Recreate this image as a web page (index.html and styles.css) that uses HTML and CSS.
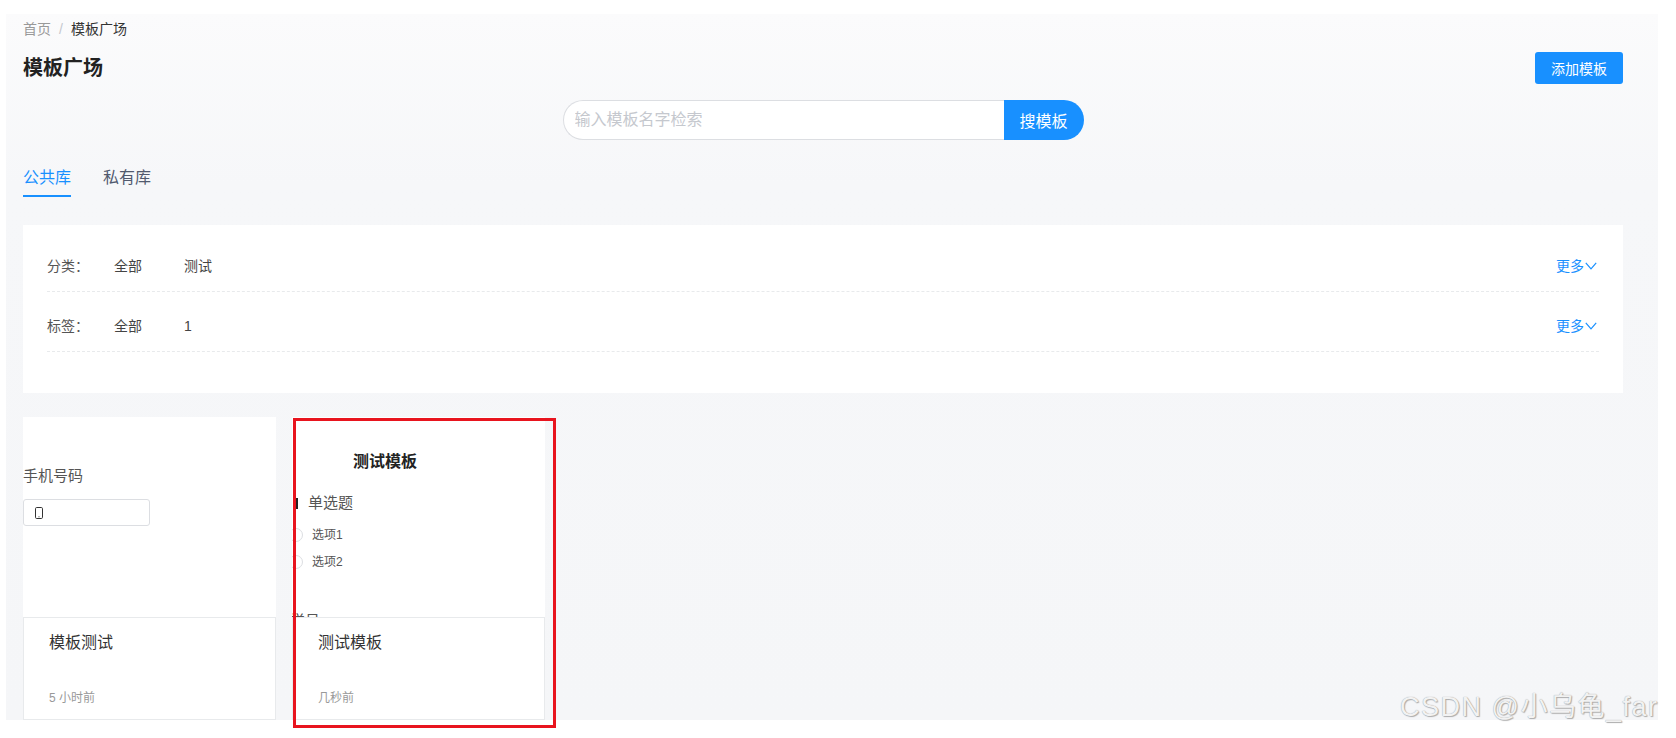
FILE: index.html
```html
<!DOCTYPE html>
<html lang="zh-CN">
<head>
<meta charset="utf-8">
<title>模板广场</title>
<link rel="stylesheet" href="styles.css">
</head>
<body>
<div class="page">
  <div class="breadcrumb">
    <span class="crumb-link">首页</span>
    <span class="crumb-sep">/</span>
    <span class="crumb-current">模板广场</span>
  </div>
  <div class="header">
    <h1 class="title">模板广场</h1>
    <button class="btn-primary">添加模板</button>
  </div>
  <div class="search-row">
    <div class="search">
      <input class="search-input" type="text" placeholder="输入模板名字检索">
      <button class="search-btn">搜模板</button>
    </div>
  </div>
  <div class="tabs">
    <div class="tab tab-active">公共库</div>
    <div class="tab">私有库</div>
  </div>
  <div class="filter-card">
    <div class="filter-row">
      <span class="filter-label">分类：</span>
      <span class="filter-item">全部</span>
      <span class="filter-item">测试</span>
      <span class="filter-more">更多<svg class="chev" width="12" height="8" viewBox="0 0 12 8"><polyline points="0.8,0.8 6,6.8 11.2,0.8" fill="none" stroke="#1890ff" stroke-width="1.2"/></svg></span>
    </div>
    <div class="filter-row">
      <span class="filter-label">标签：</span>
      <span class="filter-item">全部</span>
      <span class="filter-item">1</span>
      <span class="filter-more">更多<svg class="chev" width="12" height="8" viewBox="0 0 12 8"><polyline points="0.8,0.8 6,6.8 11.2,0.8" fill="none" stroke="#1890ff" stroke-width="1.2"/></svg></span>
    </div>
  </div>
  <div class="cards">
    <div class="card">
      <div class="preview preview-phone">
        <div class="p-label">手机号码</div>
        <div class="p-input">
          <svg width="10" height="12" viewBox="0 0 10 12"><rect x="1.5" y="0.5" width="7" height="11" rx="1.2" fill="none" stroke="#333" stroke-width="1"/><rect x="4.5" y="9.3" width="1" height="1" fill="#333"/></svg>
        </div>
      </div>
      <div class="info">
        <div class="info-title">模板测试</div>
        <div class="info-time">5 小时前</div>
      </div>
    </div>
    <div class="card card-marked">
      <div class="preview preview-form">
        <div class="f-title">测试模板</div>
        <div class="f-question"><span class="f-bar"></span>单选题</div>
        <div class="f-radio"><span class="f-circle"></span>选项1</div>
        <div class="f-radio f-radio-2"><span class="f-circle"></span>选项2</div>
        <div class="f-next">学号</div>
      </div>
      <div class="info">
        <div class="info-title">测试模板</div>
        <div class="info-time">几秒前</div>
      </div>
      <div class="mark"></div>
    </div>
  </div>
</div>
<div class="watermark">CSDN @小乌龟_far</div>
</body>
</html>
```

FILE: styles.css
```css
html, body {
  margin: 0;
  padding: 0;
  background: #ffffff;
}
body {
  font-family: "Liberation Sans", "Noto Sans CJK SC", sans-serif;
  color: #515a6e;
  width: 1676px;
  height: 738px;
  overflow: hidden;
  position: relative;
}
.page {
  margin: 14px 0 0 6px;
  width: 1652px;
  height: 706px;
  box-sizing: border-box;
  padding: 5px 35px 0 17px;
  background: linear-gradient(#fbfbfc 0, #f6f7f9 170px, #f5f6f8 100%);
}
.breadcrumb {
  font-size: 14px;
  line-height: 20px;
  height: 20px;
  display: flex;
  align-items: center;
}
.crumb-link { color: #999; }
.crumb-sep { color: #c5c8ce; margin: 0 8px; }
.crumb-current { color: #333; }
.header {
  margin-top: 13px;
  height: 32px;
  display: flex;
  align-items: center;
  justify-content: space-between;
}
.title {
  margin: 0;
  font-size: 20px;
  line-height: 28px;
  font-weight: 700;
  color: #222;
}
.btn-primary {
  width: 88px;
  height: 32px;
  border: 0;
  border-radius: 3px;
  background: #1890ff;
  color: #fff;
  font-family: inherit;
  font-size: 14px;
  padding: 0;
}
.search-row {
  margin-top: 16px;
  display: flex;
  justify-content: center;
}
.search {
  display: flex;
  width: 521px;
  height: 40px;
}
.search-input {
  flex: 1;
  box-sizing: border-box;
  height: 40px;
  border: 1px solid #dcdee2;
  border-right: 0;
  border-radius: 20px 0 0 20px;
  padding: 0 0 0 11px;
  font-family: inherit;
  font-size: 16px;
  color: #515a6e;
  background: #fff;
  outline: none;
}
.search-input::placeholder { color: #c5c8ce; }
.search-btn {
  width: 80px;
  height: 40px;
  border: 0;
  border-radius: 0 20px 20px 0;
  background: #1890ff;
  color: #fff;
  font-family: inherit;
  font-size: 16px;
  padding: 0;
}
.tabs {
  margin-top: 26px;
  display: flex;
  gap: 32px;
}
.tab {
  font-size: 16px;
  line-height: 24px;
  padding-bottom: 5px;
  border-bottom: 2px solid transparent;
  color: #515a6e;
}
.tab-active {
  color: #1890ff;
  border-bottom-color: #1890ff;
}
.filter-card {
  margin-top: 28px;
  background: #fff;
  padding: 7px 24px 41px;
}
.filter-row {
  height: 60px;
  box-sizing: border-box;
  padding-top: 8px;
  display: flex;
  align-items: center;
  border-bottom: 1px dashed #e8eaec;
  font-size: 14px;
  line-height: 20px;
}
.filter-label {
  width: 67px;
  color: #555;
}
.filter-item {
  width: 70px;
  color: #444;
}
.filter-more {
  margin-left: auto;
  margin-right: 2px;
  color: #1890ff;
  display: flex;
  align-items: center;
}
.chev { margin-left: 1px; }
.cards {
  margin-top: 24px;
  display: flex;
  gap: 16px;
}
.card {
  width: 253px;
  height: 303px;
  background: #fff;
  display: flex;
  flex-direction: column;
  position: relative;
}
.preview {
  height: 200px;
  overflow: hidden;
  box-sizing: border-box;
}
.preview-phone { padding-top: 48px; }
.p-label {
  font-size: 15px;
  line-height: 22px;
  color: #555;
}
.p-input {
  margin-top: 12px;
  width: 127px;
  height: 27px;
  box-sizing: border-box;
  border: 1px solid #dcdee2;
  border-radius: 3px;
  display: flex;
  align-items: center;
  padding-left: 10px;
}
.preview-form { padding-top: 33px; }
.f-title {
  font-size: 16px;
  line-height: 24px;
  font-weight: 700;
  color: #222;
  padding-left: 61px;
}
.f-question {
  margin-top: 18px;
  margin-left: 3px;
  display: flex;
  align-items: center;
  font-size: 15px;
  line-height: 22px;
  color: #555;
}
.f-bar {
  width: 3px;
  height: 11px;
  background: #222;
  margin-right: 10px;
}
.f-radio {
  margin-top: 11px;
  margin-left: -3px;
  display: flex;
  align-items: center;
  font-size: 12px;
  line-height: 20px;
  color: #555;
}
.f-radio-2 { margin-top: 7px; }
.f-circle {
  width: 14px;
  height: 14px;
  box-sizing: border-box;
  border: 1px solid #dcdee2;
  border-radius: 50%;
  margin-right: 9px;
}
.f-next {
  margin-top: 38px;
  margin-left: -2px;
  font-size: 15px;
  line-height: 22px;
  color: #555;
}
.info {
  height: 103px;
  box-sizing: border-box;
  border: 1px solid #e8eaec;
  padding: 13px 24px 12px 25px;
}
.info-title {
  font-size: 16px;
  line-height: 24px;
  color: #333;
}
.info-time {
  margin-top: 34px;
  font-size: 12px;
  line-height: 18px;
  color: #999;
}
.mark {
  position: absolute;
  left: 1px;
  top: 1px;
  width: 263px;
  height: 310px;
  box-sizing: border-box;
  border: 3px solid #e8141e;
}
.watermark {
  position: absolute;
  left: 1400px;
  top: 690px;
  font-size: 27px;
  line-height: 34px;
  letter-spacing: 1.5px;
  white-space: nowrap;
  color: #f2f2f2;
  text-shadow: 0 0 1px #8f8f8f, 1px 1px 1px #b0b0b0;
}
```
